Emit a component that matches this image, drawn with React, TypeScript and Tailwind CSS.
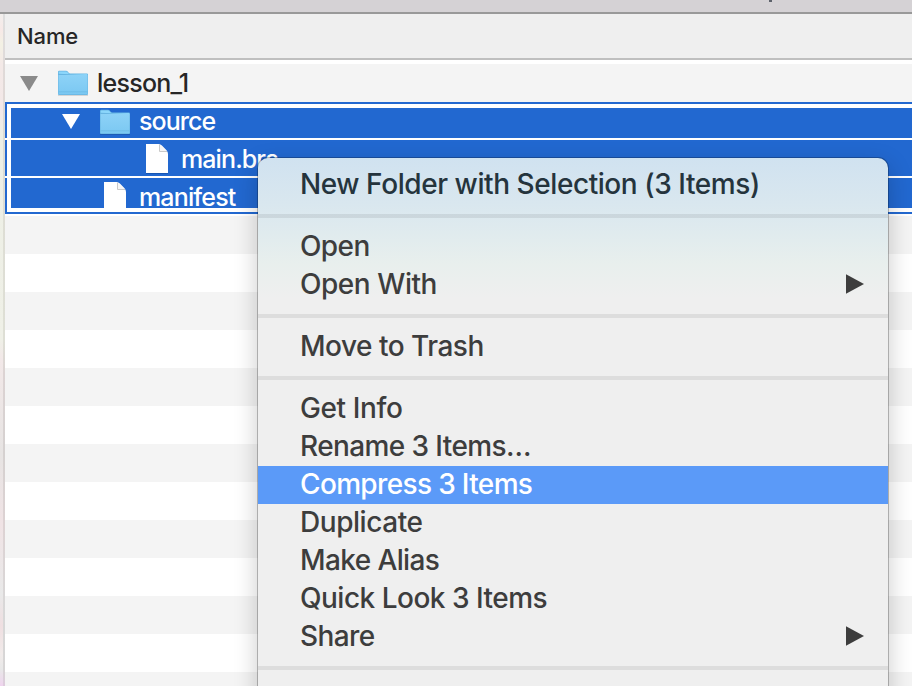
import React from "react";

const FolderIcon = () => (
  <svg width="32" height="28" viewBox="0 0 32 28" className="block shrink-0">
    <defs>
      <linearGradient id="folderFront" x1="0" y1="0" x2="0" y2="1">
        <stop offset="0" stopColor="#8dd2f7" />
        <stop offset="1" stopColor="#7bc8f2" />
      </linearGradient>
    </defs>
    <path d="M1 26h30v.8H1z" fill="#000" opacity=".16" />
    <path d="M1 4.2V3q0-1.2 1.2-1.2h6.9q1 0 1.6.8l1 1.2q.5.6 1.4.6h16.8Q31 4.4 31 5.600V25q0 1-1 1H2q-1 0-1-1z" fill="#68b5e2" />
    <path d="M1.700 4.800V3.100q0-.7.8-.7h6.500q.8 0 1.300.7l1 1.200q.6.700 1.500.700h16.600q.9 0 .9.900z" fill="#8bd6fb" />
    <path d="M1.500 6h29v18.700q0 .5-.5.5H2q-.5 0-.5-.5z" fill="url(#folderFront)" />
    <path d="M1.500 22.800h29" stroke="#68b9e3" strokeWidth=".7" />
  </svg>
);

const FileIcon = () => (
  <svg width="26" height="32" viewBox="0 0 26 32" className="block shrink-0">
    <path d="M2 2h12.500q2 0 3.400 1.500l4.600 4.700Q24 9.800 24 12v19H2z" fill="#124b9e" opacity=".6" />
    <path d="M2 1h12.500q2 0 3.400 1.500l4.600 4.700Q24 8.800 24 11v19H2z" fill="#fff" />
    <path d="M15.500 1.500V8.500h7.500" fill="#f6f6f6" stroke="#c9c9c9" strokeWidth="1" />
  </svg>
);

const Disclosure = ({ color }: { color: string }) => (
  <svg width="18" height="15" viewBox="0 0 18 15" className="block shrink-0">
    <path d="M0 0h18L9 15z" fill={color} />
  </svg>
);

type Item = { label: string; spacing: string; arrow?: boolean; active?: boolean };

const groups: Item[][] = [
  [{ label: "New Folder with Selection (3 Items)", spacing: "tracking-[-0.43px]" }],
  [
    { label: "Open", spacing: "tracking-[-0.6px]" },
    { label: "Open With", spacing: "tracking-[-0.45px]", arrow: true },
  ],
  [{ label: "Move to Trash", spacing: "tracking-[-0.5px]" }],
  [
    { label: "Get Info", spacing: "tracking-[-0.4px]" },
    { label: "Rename 3 Items…", spacing: "tracking-[-0.6px]" },
    { label: "Compress 3 Items", spacing: "tracking-[-0.65px]", active: true },
    { label: "Duplicate", spacing: "tracking-[-0.45px]" },
    { label: "Make Alias", spacing: "tracking-[-0.6px]" },
    { label: "Quick Look 3 Items", spacing: "tracking-[-0.5px]" },
    { label: "Share", spacing: "tracking-[-0.6px]", arrow: true },
  ],
];

const MenuRow = ({ item, first }: { item: Item; first: boolean }) => (
  <div
    className={`flex h-[38px] items-center justify-between pr-6 pl-[42px] text-[28px] leading-[38px] whitespace-nowrap ${
      item.active
        ? "bg-[#5b9af8] font-medium text-white"
        : first
          ? "font-[450] text-[#25343d]"
          : "font-[450] text-[#3d3d3d]"
    }`}
  >
    <span className={`relative -top-px ${item.spacing}`}>{item.label}</span>
    {item.arrow && (
      <svg width="18" height="20" viewBox="0 0 18 20" className="mb-[2px] block">
        <path d="M0 .3l18 9.700L0 19.700z" fill="#3d3d3d" />
      </svg>
    )}
  </div>
);

const Separator = () => (
  <div className="h-6 pt-[10px]">
    <div className="h-1 bg-black/[0.075]" />
  </div>
);

export default function App() {
  return (
    <div className="relative flex h-[686px] w-[912px] flex-col overflow-hidden bg-white font-['Inter','Liberation_Sans',sans-serif]">
      <div className="flex h-[14px] shrink-0 justify-end border-b-2 border-[#999] bg-[#d5d2d5] pr-[140px]">
        <div className="h-[2px] w-[3px] bg-[#5d626b]" />
      </div>

      <div className="flex min-h-0 flex-1">
        <div className="flex w-[5px] shrink-0">
          <div className="w-[3px] bg-[linear-gradient(180deg,#f2efed_0px,#f7e9e7_16px,#f3f1e4_30px,#f3e9e7_50px,#f3e8e8_95px,#edefe5_120px,#eff0e7_325px,#f2e8e8_345px,#e7e4e3_440px,#f0e3e5_510px,#e9e9e9_580px,#efdfe1_612px,#f1ebea_640px,#e8e8e8_655px,#efd4ee_672px)]" />
          <div className="w-[2px] bg-[linear-gradient(180deg,#dedede_0px,#e0d8d6_80px,#dddcd4_120px,#dedfd5_325px,#dcd3d3_360px,#d5d1d0_440px,#ddd2d3_510px,#d8d8d8_600px,#d7d5d5_655px,#decbdd_672px)]" />
        </div>

        <div className="flex min-w-0 flex-1 flex-col">
          <div className="h-[46px] shrink-0 border-b-2 border-[#bfbfbf] bg-[#efefef] pl-3 text-[22px] leading-[44px] font-medium tracking-[-0.1px] text-[#262626]">
            Name
          </div>
          <div className="h-1 shrink-0" />
          <div className="flex h-[38px] shrink-0 items-center bg-[#f4f4f4] pl-[15px]">
            <Disclosure color="#8a8a8a" />
            <div className="ml-[19px]">
              <FolderIcon />
            </div>
            <span className="ml-2 text-[25px] leading-[38px] font-[450] tracking-[-0.75px] text-[#262626]">lesson_1</span>
          </div>

          <div className="flex h-[112px] shrink-0 flex-col text-[25px] leading-[38px] font-medium text-white">
            <div className="h-9 border-t-2 border-l-2 border-[#2268d0] bg-white pt-1 pl-1">
              <div className="flex h-[30px] bg-[#2268d0] pl-[51px]">
                <div className="pt-[6px]">
                  <Disclosure color="#fff" />
                </div>
                <div className="ml-[19px]">
                  <FolderIcon />
                </div>
                <span className="-mt-[6px] ml-2 tracking-[-0.95px]">source</span>
              </div>
            </div>
            <div className="mt-[2px] h-9 border-l-2 border-[#2268d0] bg-white pl-1">
              <div className="flex h-9 bg-[#2268d0] pt-[3px] pl-[133px]">
                <FileIcon />
                <span className="-mt-[3px] ml-[11px] tracking-[-0.9px]">main.brs</span>
              </div>
            </div>
            <div className="mt-[2px] h-9 border-b-2 border-l-2 border-[#2268d0] bg-white pb-1 pl-1">
              <div className="flex h-[30px] bg-[#2268d0] pt-[3px] pl-[91px]">
                <div className="h-[27px] shrink-0 overflow-hidden">
                  <FileIcon />
                </div>
                <span className="-mt-[3px] ml-[11px] tracking-[-0.85px]">manifest</span>
              </div>
            </div>
          </div>
          <div className="h-[2px] shrink-0" />
          <div className="flex-1 bg-[repeating-linear-gradient(180deg,#f4f4f4_0px,#f4f4f4_38px,#ffffff_38px,#ffffff_76px)]" />
        </div>
      </div>

      <div className="absolute top-[158px] left-[258px] h-[560px] w-[630px] overflow-hidden rounded-[10px] bg-[#efefef] bg-[linear-gradient(180deg,#d0e2f0_0px,#d9e7ef_45px,#e0ebee_75px,#e8efed_105px,#efefef_140px)] pt-2 shadow-[0_0_0_1px_rgba(0,0,0,0.24),0_8px_24px_rgba(0,0,0,0.22)]">
        {groups.map((items, g) => (
          <div key={g}>
            {items.map((item) => (
              <MenuRow key={item.label} item={item} first={g === 0} />
            ))}
            <Separator />
          </div>
        ))}
      </div>
    </div>
  );
}
